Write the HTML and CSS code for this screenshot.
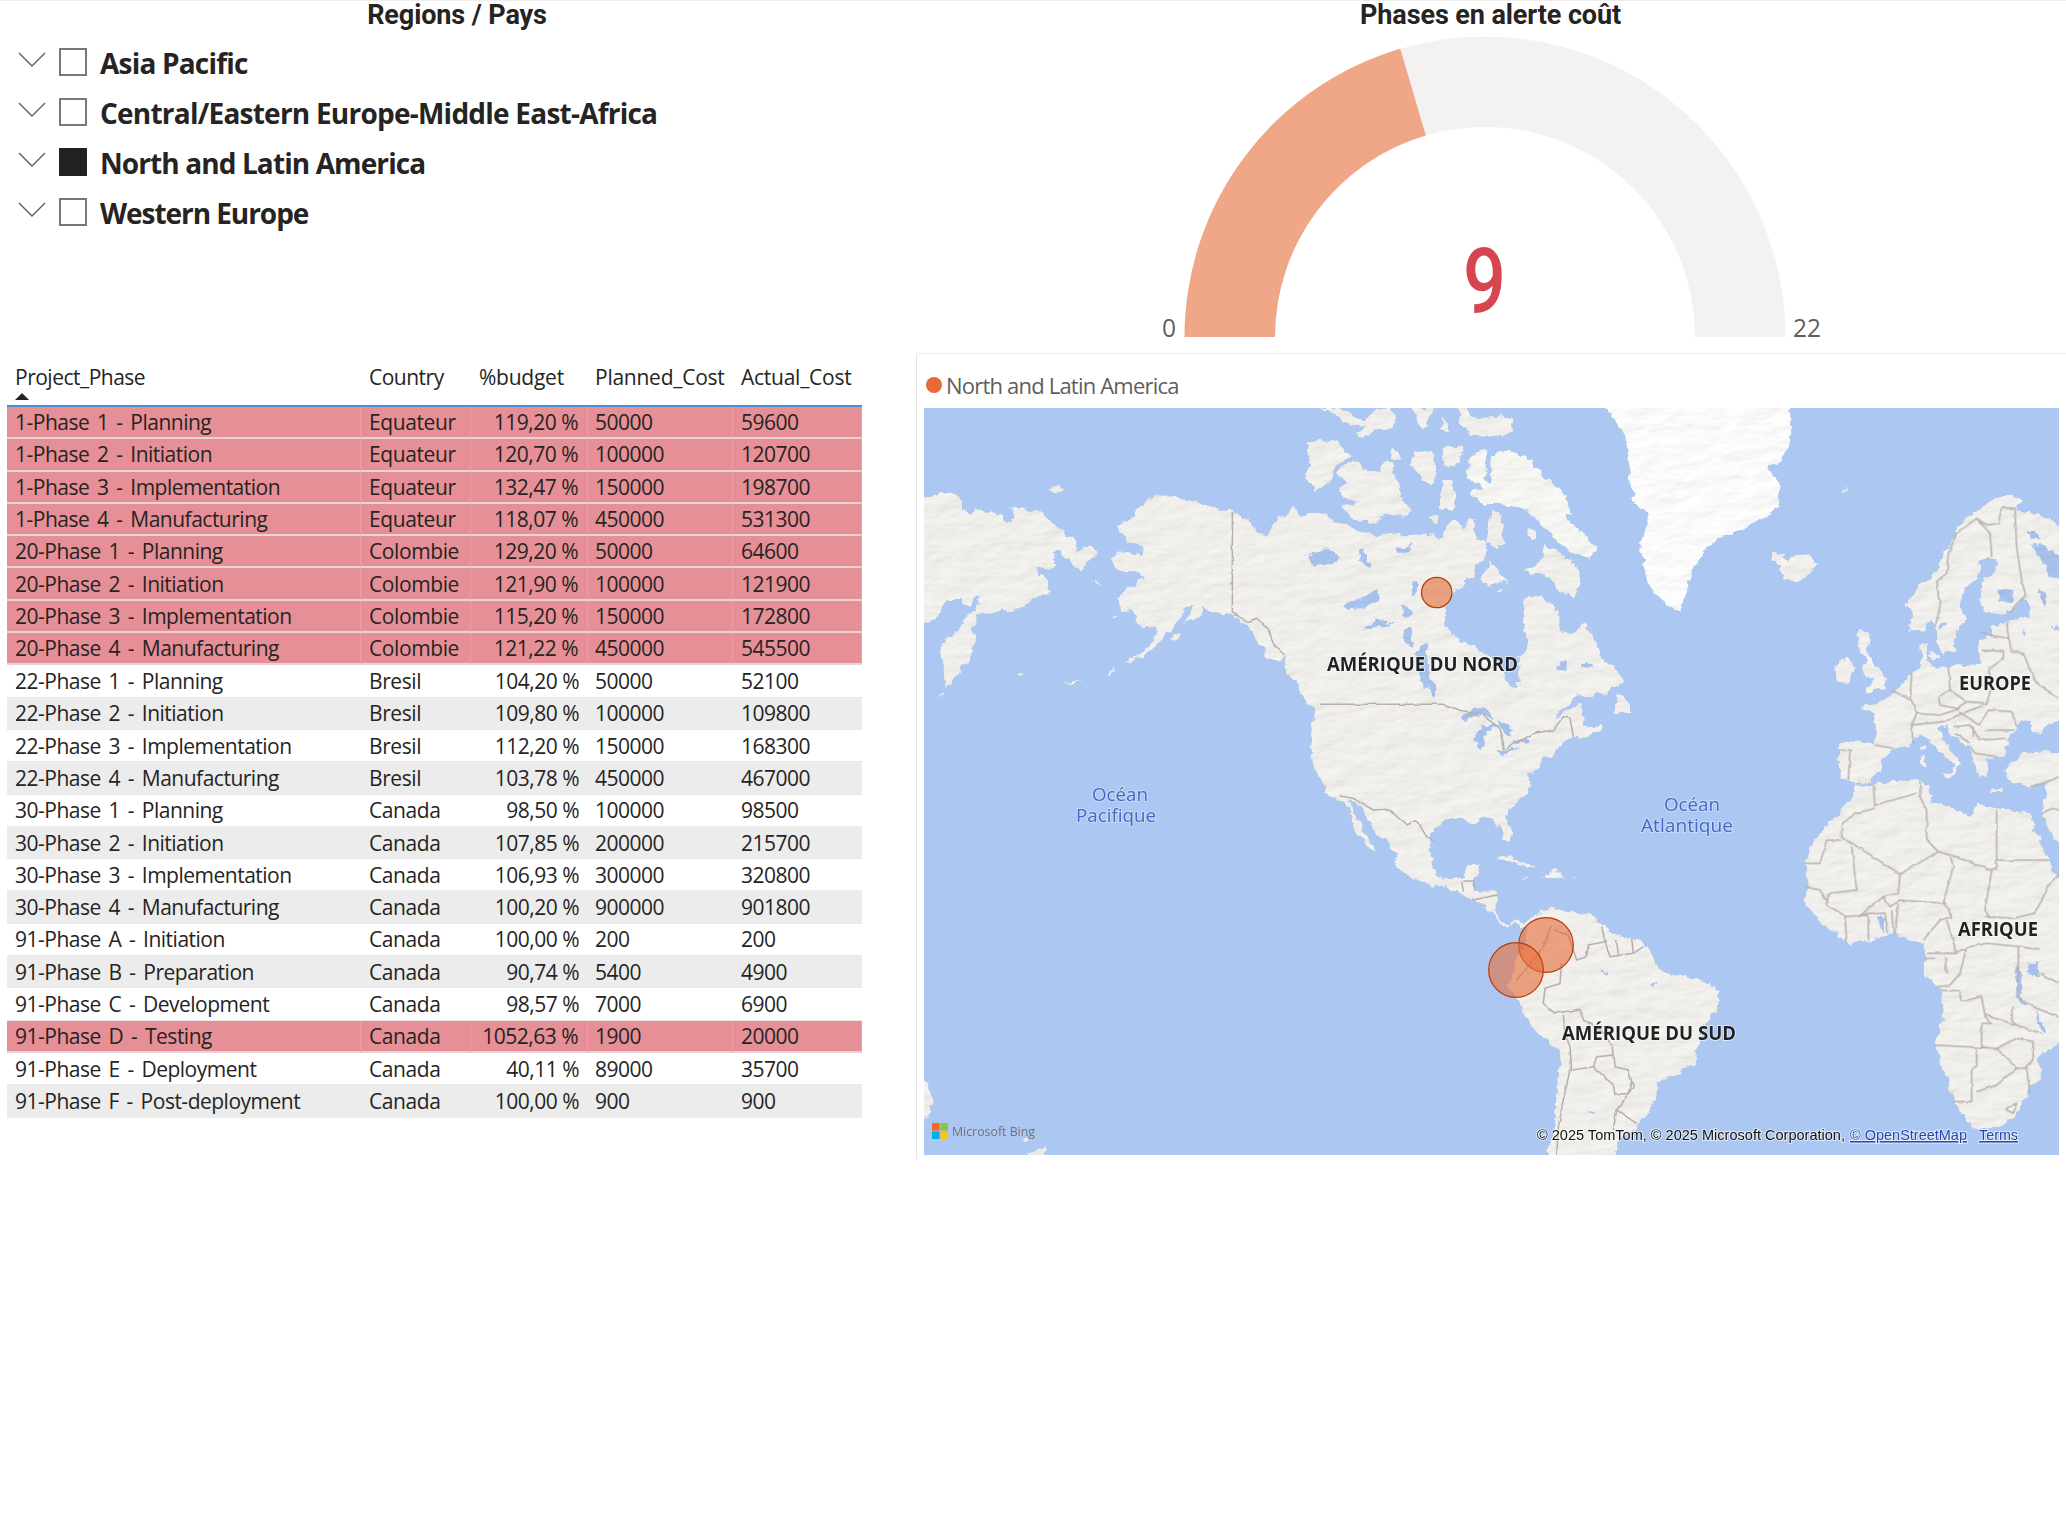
FILE: index.html
```html
<!DOCTYPE html>
<html lang="fr">
<head>
<meta charset="utf-8">
<title>Phases en alerte coût</title>
<link rel="stylesheet" href="styles.css">
</head>
<body>
<main class="report">
  <section class="slicer">
    <h2 class="title">Regions / Pays</h2>
    <ul class="regions">
      <li><svg class="chev" viewBox="0 0 28 16"><path d="M1 1 14 14 27 1"/></svg><span class="box"></span><span class="name n1">Asia Pacific</span></li>
      <li><svg class="chev" viewBox="0 0 28 16"><path d="M1 1 14 14 27 1"/></svg><span class="box"></span><span class="name n2">Central/Eastern Europe-Middle East-Africa</span></li>
      <li><svg class="chev" viewBox="0 0 28 16"><path d="M1 1 14 14 27 1"/></svg><span class="box on"></span><span class="name n3">North and Latin America</span></li>
      <li><svg class="chev" viewBox="0 0 28 16"><path d="M1 1 14 14 27 1"/></svg><span class="box"></span><span class="name n4">Western Europe</span></li>
    </ul>
  </section>

  <section class="gauge">
    <h2 class="title wide">Phases en alerte coût</h2>
    <svg class="dial" viewBox="1140 32 720 312">
      <path fill="#f3f2f1" d="M1184.5 337A300.5 300.5 0 0 1 1785.5 337H1695A210 210 0 0 0 1275 337Z"/>
      <path fill="#f0a787" d="M1184.5 337A300.5 300.5 0 0 1 1400.3 48.7L1425.8 135.5A210 210 0 0 0 1275 337Z"/>
      <text class="value" x="1463" y="313" textLength="43" lengthAdjust="spacingAndGlyphs">9</text>
      <text class="bound" x="1162" y="337" textLength="14" lengthAdjust="spacingAndGlyphs">0</text>
      <text class="bound" x="1793" y="337" textLength="28" lengthAdjust="spacingAndGlyphs">22</text>
    </svg>
  </section>

  <section class="phases">
    <table>
      <colgroup><col class="c1"><col class="c2"><col class="c3"><col class="c4"><col class="c5"></colgroup>
      <thead><tr><th>Project_Phase<svg class="sort" viewBox="0 0 14 7"><path d="M0 7 7 0 14 7Z"/></svg></th><th>Country</th><th>%budget</th><th>Planned_Cost</th><th>Actual_Cost</th></tr></thead>
      <tbody>
        <tr class="alert"><td>1-Phase 1 - Planning</td><td>Equateur</td><td>119,20 %</td><td>50000</td><td>59600</td></tr>
        <tr class="alert"><td>1-Phase 2 - Initiation</td><td>Equateur</td><td>120,70 %</td><td>100000</td><td>120700</td></tr>
        <tr class="alert"><td>1-Phase 3 - Implementation</td><td>Equateur</td><td>132,47 %</td><td>150000</td><td>198700</td></tr>
        <tr class="alert"><td>1-Phase 4 - Manufacturing</td><td>Equateur</td><td>118,07 %</td><td>450000</td><td>531300</td></tr>
        <tr class="alert"><td>20-Phase 1 - Planning</td><td>Colombie</td><td>129,20 %</td><td>50000</td><td>64600</td></tr>
        <tr class="alert"><td>20-Phase 2 - Initiation</td><td>Colombie</td><td>121,90 %</td><td>100000</td><td>121900</td></tr>
        <tr class="alert"><td>20-Phase 3 - Implementation</td><td>Colombie</td><td>115,20 %</td><td>150000</td><td>172800</td></tr>
        <tr class="alert"><td>20-Phase 4 - Manufacturing</td><td>Colombie</td><td>121,22 %</td><td>450000</td><td>545500</td></tr>
        <tr><td>22-Phase 1 - Planning</td><td>Bresil</td><td>104,20 %</td><td>50000</td><td>52100</td></tr>
        <tr><td>22-Phase 2 - Initiation</td><td>Bresil</td><td>109,80 %</td><td>100000</td><td>109800</td></tr>
        <tr><td>22-Phase 3 - Implementation</td><td>Bresil</td><td>112,20 %</td><td>150000</td><td>168300</td></tr>
        <tr><td>22-Phase 4 - Manufacturing</td><td>Bresil</td><td>103,78 %</td><td>450000</td><td>467000</td></tr>
        <tr><td>30-Phase 1 - Planning</td><td>Canada</td><td>98,50 %</td><td>100000</td><td>98500</td></tr>
        <tr><td>30-Phase 2 - Initiation</td><td>Canada</td><td>107,85 %</td><td>200000</td><td>215700</td></tr>
        <tr><td>30-Phase 3 - Implementation</td><td>Canada</td><td>106,93 %</td><td>300000</td><td>320800</td></tr>
        <tr><td>30-Phase 4 - Manufacturing</td><td>Canada</td><td>100,20 %</td><td>900000</td><td>901800</td></tr>
        <tr><td>91-Phase A - Initiation</td><td>Canada</td><td>100,00 %</td><td>200</td><td>200</td></tr>
        <tr><td>91-Phase B - Preparation</td><td>Canada</td><td>90,74 %</td><td>5400</td><td>4900</td></tr>
        <tr><td>91-Phase C - Development</td><td>Canada</td><td>98,57 %</td><td>7000</td><td>6900</td></tr>
        <tr class="alert"><td>91-Phase D - Testing</td><td>Canada</td><td>1052,63 %</td><td>1900</td><td>20000</td></tr>
        <tr><td>91-Phase E - Deployment</td><td>Canada</td><td>40,11 %</td><td>89000</td><td>35700</td></tr>
        <tr><td>91-Phase F - Post-deployment</td><td>Canada</td><td>100,00 %</td><td>900</td><td>900</td></tr>
      </tbody>
    </table>
  </section>

  <section class="mapcard">
    <div class="legend"><span class="dot"></span><span>North and Latin America</span></div>
    <svg class="map" viewBox="924 408 1135 747">
      <defs>
        <filter id="coast" filterUnits="userSpaceOnUse" x="900" y="390" width="1180" height="780" color-interpolation-filters="sRGB">
          <feTurbulence type="fractalNoise" baseFrequency="0.11" numOctaves="3" seed="4" result="n"/>
          <feDisplacementMap in="SourceGraphic" in2="n" scale="9" xChannelSelector="R" yChannelSelector="G" result="land"/>
          <feTurbulence type="fractalNoise" baseFrequency="0.03 0.07" numOctaves="3" seed="9" result="h"/>
          <feColorMatrix in="h" type="matrix" values="0 0 0 0 0  0 0 0 0 0  0 0 0 0 0  1 0 0 0 0" result="ha"/>
          <feDiffuseLighting in="ha" surfaceScale="1.5" lighting-color="#fff" result="lit"><feDistantLight azimuth="225" elevation="62"/></feDiffuseLighting>
          <feComposite in="land" in2="lit" operator="arithmetic" k1="0.32" k2="0.715" k3="0" k4="0" result="shaded"/>
          <feComposite in="shaded" in2="land" operator="in"/>
        </filter>
        <filter id="line" filterUnits="userSpaceOnUse" x="900" y="390" width="1180" height="780" color-interpolation-filters="sRGB">
          <feTurbulence type="fractalNoise" baseFrequency="0.11" numOctaves="2" seed="4" result="n"/>
          <feDisplacementMap in="SourceGraphic" in2="n" scale="3" xChannelSelector="R" yChannelSelector="G"/>
        </filter>
      </defs>
      <rect x="924" y="408" width="1135" height="747" fill="#acc7f2"/>
      <g filter="url(#coast)" fill="#f0efeb">
        <g transform="translate(910 345) scale(.33333)">
          <path d="M30 452 85 444 125 446 152 465 155 492 178 500 210 496 262 510 280 515 290 535 308 520 303 490 315 484 330 492 372 494 405 510 430 535 465 565 495 585 500 620 520 602 545 602 566 628 540 642 518 678 490 662 475 645 455 638 450 620 434 622 432 660 412 672 380 676 408 698 420 742 400 745 350 770 320 792 300 805 270 798 245 800 215 808 195 818 188 845 197 880 188 915 180 950 155 965 130 1005 110 1030 105 1000 95 950 95 910 110 882 145 855 170 815 200 795 212 745 195 760 180 785 162 780 155 765 115 765 95 785 80 820 30 836Z"/>
          <path d="M412 440 430 425 455 420 465 435 440 447ZM540 712 560 710 580 720 565 722ZM602 812 625 806 620 818ZM778 885 795 865 812 870 800 895ZM585 995 612 968 618 972 600 992ZM315 990 350 988 330 995ZM450 1016 480 1012 520 1008 490 1020ZM85 1050 102 1038 95 1056Z"/>
          <path d="M1215 520 1195 520 1165 505 1150 478 1138 500 1105 520 1085 545 1062 572 1045 560 1020 530 985 508 965 498 925 490 880 478 840 465 800 460 760 450 735 455 710 470 680 490 665 520 640 530 617 545 635 565 650 588 690 600 698 620 690 630 650 620 625 625 600 640 612 665 640 680 665 683 690 675 695 705 660 722 640 740 622 765 640 800 665 800 685 830 690 845 740 850 735 880 710 905 675 935 640 955 670 948 720 920 755 890 770 865 800 840 815 815 825 780 850 785 840 800 825 838 870 815 875 790 910 800 970 815 1005 835 1030 870 1050 900 1070 940 1105 950 1120 930 1130 975 1160 1010 1165 1035 1200 1080 1240 1085V520Z"/>
          <path d="M30 2200 55 2215 66 2255 62 2300 40 2335H30ZM355 2425 385 2412 410 2410 395 2440H360ZM330 2380 345 2375 355 2390 345 2392Z"/>
        </g>
        <g transform="translate(1300 400) scale(.33333)">
          <path d="M0 345 45 335 80 345 110 365 150 370 165 390 190 400 240 405 270 395 320 405 350 400 390 405 425 415 440 385 455 360 480 360 490 390 510 350 525 375 530 410 560 430 550 470 530 500 525 525 495 540 490 560 460 575 450 600 435 635 435 680 460 695 475 725 520 735 545 755 600 790 612 810 615 840 640 865 655 845 655 800 650 770 680 745 685 720 665 690 672 650 668 600 690 583 720 590 750 610 778 635 780 680 800 700 830 700 850 660 870 680 885 720 900 760 915 785 940 800 965 825 970 850 920 880 880 885 830 888 790 925 760 960 800 930 850 910 845 940 855 970 880 985 905 970 910 985 870 1005 835 1020 820 1010 775 1040 770 1060 730 1075 710 1110 685 1120 690 1150 697 1160 670 1195 640 1215 620 1235 620 1250 637 1300 630 1335 612 1320 600 1285 590 1260 550 1250 510 1270 490 1255 440 1262 400 1290 390 1320 388 1370 410 1420 430 1435 490 1430 500 1400 542 1392 535 1420 520 1450 525 1475 580 1470 592 1490 585 1540 600 1560 630 1575 650 1560 668 1565 690 1590 650 1575 620 1582 600 1575 575 1545 540 1510 480 1480 430 1465 380 1455 330 1430 290 1400 290 1360 250 1320 215 1280 185 1220 150 1200 160 1240 185 1280 210 1320 228 1360 205 1345 180 1305 160 1290 155 1255 140 1215 120 1205 80 1180 60 1140 40 1100 30 1040 35 980 45 930 20 900 0 880Z"/>
          <path d="M28 125 65 115 110 130 150 165 105 205 75 260 45 270 15 235 30 190 20 150ZM105 220 160 175 185 205 240 215 255 180 270 175 290 240 305 290 335 330 300 350 255 345 210 375 150 355 125 320 175 310 130 290 115 265 145 250ZM60 24H110L150 45 195 60 230 30 270 24 290 50 275 85 235 95 190 115 165 95 200 80 150 75 120 50ZM340 24H395L385 85 350 70ZM415 90 430 45 452 100ZM470 15 505 30 530 60 600 45 640 60 635 100 560 112 510 105 480 70ZM330 195 345 150 400 155 410 235 385 258 365 230ZM430 140 495 140 480 190 445 205 425 180ZM430 240 455 240 468 300 460 335 415 320ZM270 150 300 155 295 180 275 178ZM380 350 410 340 418 375ZM575 335 600 340 610 400 615 430 590 440 560 430 565 380ZM540 540 570 480 600 520 628 545 600 545 570 558ZM670 510 725 485 730 430 770 450 830 500 845 540 820 600 770 560 740 525 690 520ZM680 390 705 388 710 415 685 422ZM585 580 605 565 608 575ZM935 940 960 875 985 910 1000 935 960 940Z"/>
          <path d="M505 180 530 152 560 150 562 200 556 240 575 255 570 180 600 155 625 155 670 165 705 200 745 240 790 280 815 340 800 355 850 400 890 440 870 480 830 465 790 440 750 405 720 370 685 330 650 320 600 310 550 310 515 290 510 270 550 268 505 235Z" fill="#f5f5f2"/>
          <path d="M905 15 945 60 975 110 985 170 990 240 1000 300 1050 350 1020 430 1030 500 1060 580 1100 610 1140 640 1160 570 1179 510 1225 440 1278 405 1320 390 1400 350 1430 320 1440 260 1400 200 1450 180 1470 120 1475 60 1470 15Z" fill="#fbfbfb"/>
          <path d="M585 1370 620 1362 690 1395 712 1405 680 1408 640 1385ZM720 1432 765 1410 800 1428 760 1438ZM665 1434 688 1432 680 1440ZM815 1434 838 1432 825 1440Z"/>
          <path d="M672 1570 700 1545 750 1520 800 1535 880 1545 920 1580 960 1610 1020 1615 1050 1660 1080 1710 1150 1730 1200 1735 1260 1775 1255 1820 1205 1890 1195 1940 1180 1995 1130 2025 1070 2050 1065 2110 1010 2185 980 2200 950 2235 940 2290H735L765 2180V2080L780 2000 775 1950 700 1890 650 1800 625 1760 640 1690 675 1630 680 1585Z"/>
        </g>
        <g transform="translate(1740 400) scale(.33333)">
          <path d="M95 455 125 462 140 485 160 465 205 462 235 490 215 525 170 548 125 535 120 500 95 480ZM375 880 400 840 370 820 375 770 345 740 350 690 385 690 395 730 380 755 410 800 445 830 440 865ZM290 850 285 800 325 775 345 795 330 845ZM600 1125 655 1110 630 1140ZM538 1068 556 1068 554 1104 540 1104ZM541 1036H557V1052H541ZM750 1165 790 1168 790 1175 750 1172ZM565 765 590 760 595 775 575 778ZM300 270 320 268 315 278Z"/>
          <path d="M980 380 920 355 870 340 830 325 850 300 820 290 780 285 740 315 700 335 660 375 640 420 610 460 600 500 570 535 520 575 500 610 515 640 505 690 545 695 575 660 590 700 600 750 605 765 640 750 650 690 680 650 660 620 665 580 715 530 720 480 745 465 770 480 765 510 725 545 720 600 735 640 780 640 830 620 850 590 875 625 870 650 800 665 750 680 760 705 720 720 712 755 725 790 665 795 620 800 580 795 560 780 565 725 540 740 545 795 520 820 490 845 475 865 450 880 430 900 395 912 360 928 400 940 410 985 405 1030 350 1022 300 1030 298 1130 330 1145 350 1150 390 1145 420 1115 425 1080 465 1050 515 1035 540 1005 570 1020 600 1060 645 1090 640 1120 665 1085 625 1045 595 985 620 980 640 1010 690 1045 700 1080 720 1130 745 1130 735 1080 770 1075 800 1060 810 1010 840 965 870 960 890 1000 910 985 980 940Z"/>
          <path d="M980 1062 900 1050 860 1058 795 1100 800 1135 870 1162 925 1145 905 1230 925 1290 980 1365Z"/>
          <path d="M345 1152 400 1155 450 1142 540 1140 570 1155 580 1210 640 1225 690 1250 710 1210 770 1225 870 1240 885 1280 910 1350 940 1420 980 1460V1920L890 1970 912 2010 905 2045 870 2060 840 2130 790 2180 700 2190 680 2165 640 2090 610 2010 585 1930 610 1860 600 1770 550 1720 555 1660 550 1625 500 1620 460 1600 400 1620 320 1630 260 1580 215 1535 190 1500 205 1450 190 1390 240 1300 290 1245 345 1175Z"/>
        </g>
        <g fill="#a6c1ec">
          <g transform="translate(1300 400) scale(.33333)">
            <path d="M475 955 520 925 560 925 580 958 530 945 500 960ZM535 1055 525 1000 550 975 600 975 560 990 550 1050ZM590 960 640 985 635 1010 615 1005 600 980ZM595 1055 640 1040 655 1045 605 1064ZM645 1022 690 1012 685 1030 648 1032ZM345 760 388 725 378 760 392 840 412 880 400 890 365 850ZM20 465 80 445 125 470 95 495 50 500ZM130 610 190 595 230 570 235 600 190 625 140 628ZM190 690 230 662 300 672 240 680ZM310 690 330 680 340 740 320 730ZM300 620 345 630 330 650 305 640ZM335 550 350 545 350 590 338 590ZM770 795 800 780 800 810 780 808ZM835 800 860 785 880 800 855 808ZM175 455 190 450 215 500 190 490ZM285 445 335 435 330 455 290 455Z"/>
            <path d="M865 2128 890 2135 885 2142 868 2135ZM900 1708 925 1715 915 1722ZM1050 1745 1068 1752 1058 1760Z"/>
          </g>
          <g transform="translate(1740 400) scale(.33333)">
            <path d="M865 440 900 430 957 465 980 540 930 530 900 470ZM895 560 920 590 915 625 898 600ZM770 565 825 570 815 610 775 605ZM860 395 900 405 880 420ZM850 685 858 705 845 700ZM935 680 975 685 960 700ZM862 1688H893V1728H862ZM600 675 615 665 612 690 598 690ZM830 1690 845 1720 850 1800 870 1820 845 1810 828 1760ZM890 1830 915 1890 910 1900 888 1850ZM410 1550 435 1548 435 1600 425 1590Z"/>
          </g>
        </g>
      </g>
      <g fill="none" stroke="#b5b0ae" stroke-width="4.6" stroke-linejoin="round" filter="url(#line)">
        <g transform="translate(1300 400) scale(.33333)">
          <path d="M-203 335V640L-155 665-130 655-95 690-75 740-45 765M60 913H430L485 932 540 940 600 985 610 1050 650 1025 710 998 760 990 790 950 810 955 820 1010M120 1188 160 1195 220 1230 265 1228 320 1275 350 1262 380 1310 405 1322M490 1443H520L525 1470M485 1445 490 1475M520 1500 590 1485"/>
          <path d="M755 1575 730 1640 690 1690 650 1740M760 1590 805 1605 830 1680 860 1670 865 1635 915 1625 930 1670 1000 1660 1030 1640M905 1580 915 1625M950 1620 955 1665M995 1615 1000 1660M785 1690 780 1750 735 1765 730 1810 765 1840 840 1828 850 1860 900 1890 940 1940 945 2000 985 2010 1000 2060 950 2130 940 2190M790 1845 795 1900 810 1940 815 2010 880 2000 940 2055 945 2085 985 2080 995 2040M880 2000 890 1970 940 1965M950 2130 1010 2170M810 2010 790 2100 775 2180 770 2265"/>
        </g>
        <g transform="translate(1740 400) scale(.33333)">
          <path d="M585 680 600 620 590 545 620 520 625 460 650 400 710 355 750 400 755 470M710 355 740 375 775 370 785 325 825 325 830 440 845 540 858 590 830 610 810 640M800 665 805 710 815 755 850 760 875 820 890 850 957 895M725 750 790 755 790 775 750 805M720 700 805 715M625 800 630 870 680 905 740 910 755 860 745 800M630 870 595 890 600 915 650 925 680 905M515 820 510 890 530 940 600 945 660 925M455 870 510 900M530 940 515 975 520 1030M515 975 560 970 615 965 655 945 730 915M405 1035 460 1045M300 1050H330L325 1140M655 935 720 975 745 930 815 935 830 980M640 980 690 975 720 1020 800 1015M735 990 820 990M690 1040 705 1060 770 1070M645 1000 690 1030M700 980V1010"/>
          <path d="M400 1155 405 1225 345 1240 305 1275M540 1140V1190L560 1230 560 1320 595 1355 480 1422 305 1310V1280M405 1215 530 1180M190 1390H240L260 1320H305M335 1340 350 1470 265 1480M480 1422 475 1480 430 1490 355 1550M430 1490 450 1520 480 1500 610 1510 640 1400 630 1365 595 1355M635 1365 755 1412 770 1405V1230M770 1380H925M755 1412 735 1530 750 1555M610 1500 635 1550 600 1560 550 1620M320 1630 315 1550 385 1545V1620M265 1480 260 1515 320 1550M355 1550 385 1540H435L445 1600M455 1530 460 1600M475 1510 465 1600M195 1460 240 1470 265 1510M620 1560 650 1660H560M640 1660 690 1640 740 1630 840 1640 900 1650M680 1640 660 1720 630 1755 590 1760M555 1675H585M615 1670 620 1720M600 1772H655L665 1805 725 1790 735 1850 755 1870H725V1940L755 1945M735 1845 830 1875M835 1640 835 1720 830 1790 890 1825 957 1850M585 1935 770 1945 830 2005 860 2005 870 2080M710 1950V2000L695 2010V2105H640M710 2075 770 2055 830 2005M770 1945 830 1915 880 1925 875 1980 855 2005M820 1820 815 1860 840 1880 905 1900M735 1550 820 1555 880 1540 895 1520 930 1450 957 1420M900 1720 957 1750M805 2120 830 2110 820 2140 800 2130ZM870 1160 910 1150 957 1130M905 1240 940 1225 957 1230"/>
        </g>
      </g>
      <g class="bubbles">
        <circle cx="1436.7" cy="592.5" r="15.2"/>
        <circle cx="1546" cy="945" r="27.3"/>
        <circle cx="1516" cy="970" r="27.3"/>
      </g>
      <g class="land-label">
        <text x="1327" y="671" textLength="191" lengthAdjust="spacingAndGlyphs">AMÉRIQUE DU NORD</text>
        <text x="1562" y="1040" textLength="174" lengthAdjust="spacingAndGlyphs">AMÉRIQUE DU SUD</text>
        <text x="1959" y="690" textLength="72" lengthAdjust="spacingAndGlyphs">EUROPE</text>
        <text x="1958" y="936" textLength="80" lengthAdjust="spacingAndGlyphs">AFRIQUE</text>
      </g>
      <g class="sea-label">
        <text x="1092" y="801" textLength="56" lengthAdjust="spacingAndGlyphs">Océan</text>
        <text x="1076" y="821.5" textLength="80" lengthAdjust="spacingAndGlyphs">Pacifique</text>
        <text x="1664" y="811" textLength="56" lengthAdjust="spacingAndGlyphs">Océan</text>
        <text x="1641" y="831.5" textLength="92" lengthAdjust="spacingAndGlyphs">Atlantique</text>
      </g>
      <g>
        <path fill="#f76622" d="M932 1123h7.6v7.6h-7.6z"/><path fill="#8cc63f" d="M940.4 1123h7.6v7.6h-7.6z"/>
        <path fill="#00adef" d="M932 1131.4h7.6v7.6h-7.6z"/><path fill="#ffc20e" d="M940.4 1131.4h7.6v7.6h-7.6z"/>
        <text class="bing" x="952" y="1136" textLength="83" lengthAdjust="spacingAndGlyphs">Microsoft Bing</text>
      </g>
      <g class="credit">
        <text x="1537" y="1140" textLength="308" lengthAdjust="spacingAndGlyphs">© 2025 TomTom, © 2025 Microsoft Corporation,</text>
        <text class="link" x="1850" y="1140" textLength="117" lengthAdjust="spacingAndGlyphs">© OpenStreetMap</text>
        <text class="link" x="1979" y="1140" textLength="39" lengthAdjust="spacingAndGlyphs">Terms</text>
      </g>
    </svg>
  </section>
</main>
</body>
</html>
```
FILE: styles.css
```css
* { box-sizing: border-box; }
body { margin: 0; background: #fff; color: #252423; font-family: "Open Sans", "Noto Sans", sans-serif; }
.report {
  display: grid;
  grid-template-columns: 916px 1150px;
  grid-template-rows: 352px auto;
  height: 1539px;
  border-top: 1px solid #eeedec;
  overflow: hidden;
}
.title { margin: 0; height: 31px; text-align: center; font: 700 27px/29px Roboto, sans-serif; letter-spacing: -0.1px; white-space: nowrap; }
.slicer .title { padding-right: 2px; }
.gauge .title { text-align: left; padding-left: 444px; }
.regions { list-style: none; margin: 5px 0 0; padding: 0 0 0 18px; }
.regions li { display: flex; height: 50px; align-items: center; }
.chev { width: 28px; height: 16px; margin: -4px 13px 0 0; fill: none; stroke: #605e5c; stroke-width: 1.4; }
.box { width: 28px; height: 28px; border: 2px solid #7a7876; margin-right: 13px; }
.box.on { background: #212121; border-color: #212121; }
.name { font-weight: 700; font-size: 28px; line-height: 50px; letter-spacing: -0.9px; padding-top: 2px; white-space: nowrap; }
.n1 { letter-spacing: -0.8px; }
.n2 { letter-spacing: -0.77px; }
.n4 { letter-spacing: -1.05px; }
.gauge { display: flex; flex-direction: column; }
.dial { width: 720px; height: 312px; margin-left: 224px; }
.value { font: 500 91px Roboto, sans-serif; fill: #d64550; }
.bound { font-size: 25px; fill: #605e5c; }
.phases { padding: 0 0 0 7px; }
table { border-collapse: separate; border-spacing: 0; table-layout: fixed; width: 855px; font-size: 21px; letter-spacing: -0.5px; }
.c1 { width: 354px; } .c2 { width: 110px; } .c3 { width: 117px; } .c4 { width: 145px; } .c5 { width: 129px; }
th { position: relative; height: 54px; padding: 0 0 4px 8px; text-align: left; font-weight: 400; line-height: 30px; border-bottom: 2px solid #4a90dc; white-space: nowrap; }
th:nth-child(n+3) { letter-spacing: -0.25px; }
.sort { position: absolute; left: 8px; bottom: 5px; width: 14px; height: 7px; fill: #252423; }
td { height: 32.3px; padding: 0 0 0 8px; line-height: 30px; white-space: nowrap; border-bottom: 1px solid #e9e9e9; }
td:nth-child(1) { word-spacing: 2.8px; }
td:nth-child(2) { letter-spacing: -0.4px; }
td:nth-child(3) { text-align: right; padding: 0 9px 0 0; }
td:nth-child(4), th:nth-child(4) { padding-left: 7px; }
tbody tr:nth-child(even) td { background: #ececec; }
tbody tr.alert td { background: #e68f96; border-bottom: 2px solid #e6d5d6; border-right: 1px solid #e9a0a6; }
.mapcard { height: 806px; border-left: 1px solid #e6e6e6; border-top: 1px solid #eee; padding: 0 0 0 7px; }
.legend { display: flex; align-items: center; gap: 4px; height: 54px; padding: 8px 0 0 2px; font-size: 22px; letter-spacing: -0.8px; color: #605e5c; }
.dot { width: 16px; height: 16px; border-radius: 50%; background: #e66c37; }
.map { display: block; width: 1135px; height: 747px; }
.bubbles circle { fill: #e66c37; fill-opacity: .6; stroke: #b73a05; stroke-width: 1.2; }
.land-label text { font-weight: 700; font-size: 19.5px; fill: #222; paint-order: stroke; stroke: #fff; stroke-opacity: .6; stroke-width: 2px; }
.sea-label text { font-size: 18.5px; font-weight: 500; fill: #4668c4; paint-order: stroke; stroke: #c9daf8; stroke-width: 2px; }
.bing { font-size: 13.5px; fill: #737373; }
.credit text { font: 15px "Liberation Sans", Arial, sans-serif; fill: #111; paint-order: stroke; stroke: #fff; stroke-opacity: .6; stroke-width: 2px; }
.credit .link { fill: #2a45b0; text-decoration: underline; }
```
